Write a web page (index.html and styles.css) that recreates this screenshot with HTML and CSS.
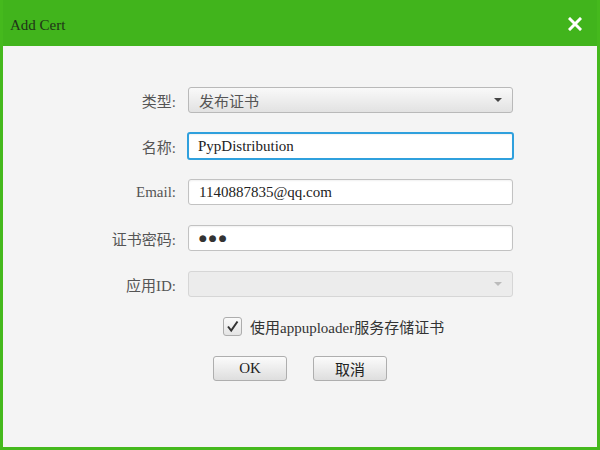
FILE: index.html
```html
<!DOCTYPE html>
<html lang="zh">
<head>
<meta charset="utf-8">
<title>Add Cert</title>
<link rel="stylesheet" href="styles.css">
</head>
<body>
<div class="window">
  <div class="titlebar">
    <span class="title">Add Cert</span>
    <span class="close">
      <svg width="14" height="14" viewBox="0 0 14 14"><path d="M2 2 L12 12 M12 2 L2 12" stroke="#fff" stroke-width="3" stroke-linecap="square" fill="none"/></svg>
    </span>
  </div>
  <div class="panel">
    <div class="form">
      <label class="label">类型:</label>
      <div class="select"><span>发布证书</span><i class="arrow"></i></div>

      <label class="label">名称:</label>
      <div class="field focused">PypDistribution</div>

      <label class="label">Email:</label>
      <div class="field">1140887835@qq.com</div>

      <label class="label">证书密码:</label>
      <div class="field"><span class="dots">●●●</span></div>

      <label class="label disabled-label">应用ID:</label>
      <div class="select disabled"><span></span><i class="arrow"></i></div>

      <div></div>
      <div class="check-row">
        <span class="checkbox">
          <svg width="15" height="15" viewBox="0 0 15 15"><path d="M3 7.5 L6.2 11.5 L12.5 2.5" stroke="#333" stroke-width="2" fill="none" stroke-linejoin="miter"/></svg>
        </span>
        <span class="check-text">使用appuploader服务存储证书</span>
      </div>
    </div>
    <div class="buttons">
      <button class="btn">OK</button>
      <button class="btn">取消</button>
    </div>
  </div>
</div>
</body>
</html>
```

FILE: styles.css
```css
html, body {
  margin: 0;
  padding: 0;
}
body {
  width: 600px;
  height: 450px;
  overflow: hidden;
  font-family: "Liberation Serif", "Noto Sans CJK SC", serif;
}
.window {
  width: 600px;
  height: 450px;
  box-sizing: border-box;
  background: #41b41c;
  border: 3px solid #45b91d;
  border-top: 0;
  display: flex;
  flex-direction: column;
}
.titlebar {
  height: 46px;
  display: flex;
  align-items: center;
  justify-content: space-between;
  padding: 0 15px 0 7px;
  flex: none;
}
.title {
  font-size: 15px;
  color: #1f3318;
  padding-top: 4px;
}
.close {
  display: flex;
  margin-top: 2px;
}
.panel {
  flex: 1;
  background: #f4f4f4;
  padding-top: 41px;
}
.form {
  display: grid;
  grid-template-columns: 173px 325px;
  column-gap: 12px;
  row-gap: 20px;
  align-items: center;
}
.label {
  text-align: right;
  font-size: 15px;
  color: #555;
  font-family: "Liberation Serif", "Noto Sans CJK SC", serif;
}
.select, .field {
  height: 26px;
  box-sizing: border-box;
  border-radius: 3px;
  display: flex;
  align-items: center;
  font-size: 15px;
}
.select {
  border: 1px solid #b9b9b9;
  background: linear-gradient(#f9f9f9, #e2e2e2);
  padding: 0 10px 0 10px;
  justify-content: space-between;
  color: #555;
  font-family: "Noto Sans CJK SC", sans-serif;
  font-size: 15px;
}
.arrow {
  width: 0;
  height: 0;
  border-left: 4px solid transparent;
  border-right: 4px solid transparent;
  border-top: 4px solid #444;
}
.select.disabled {
  background: #ececec;
  border-color: #d6d6d6;
}
.select.disabled .arrow {
  border-top-color: #bbb;
}
.field {
  background: #fff;
  border: 1px solid #c2c2c2;
  box-shadow: inset 0 1px 2px rgba(0,0,0,0.06);
  padding-left: 10px;
  color: #222;
}
.field.focused {
  border: 2px solid #2fa0dd;
  padding-left: 9px;
  height: 28px;
  margin: -1px 0 -1px -1px;
  width: calc(100% + 2px);
}
.dots {
  font-family: "DejaVu Sans", sans-serif;
  font-size: 9px;
  letter-spacing: 2px;
  color: #333;
}
.check-row {
  display: flex;
  align-items: center;
  gap: 8px;
  padding-left: 35px;
  height: 19px;
}
.checkbox {
  width: 19px;
  height: 19px;
  box-sizing: border-box;
  border: 1px solid #adadad;
  border-radius: 3px;
  background: linear-gradient(#fafafa, #e4e4e4);
  display: flex;
  align-items: center;
  justify-content: center;
}
.check-text {
  font-size: 15px;
  color: #333;
}
.buttons {
  display: flex;
  justify-content: center;
  gap: 26px;
  margin-top: 20px;
}
.btn {
  width: 74px;
  height: 25px;
  box-sizing: border-box;
  border: 1px solid #aeaeae;
  border-radius: 3px;
  background: linear-gradient(#fbfbfb, #dedede);
  font-family: "Liberation Serif", "Noto Sans CJK SC", serif;
  font-size: 15px;
  color: #222;
  padding: 0;
}
```
